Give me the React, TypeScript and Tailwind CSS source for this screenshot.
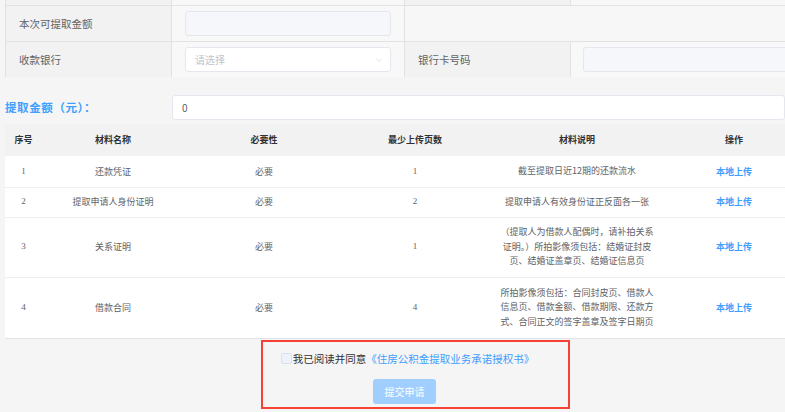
import { ChevronDown } from "lucide-react";

const cjk = "font-['Noto_Sans_CJK_SC','Noto_Sans',sans-serif]";
const serif = "font-['Liberation_Serif','Noto_Sans_CJK_SC',serif]";

const rows = [
  { no: "1", name: "还款凭证", pages: "1", desc: ["截至提取日近12期的还款流水"], h: "h-[31px]" },
  { no: "2", name: "提取申请人身份证明", pages: "2", desc: ["提取申请人有效身份证正反面各一张"], h: "h-[30px]" },
  {
    no: "3",
    name: "关系证明",
    pages: "1",
    desc: ["（提取人为借款人配偶时，请补拍关系", "证明。）所拍影像须包括：结婚证封皮", "页、结婚证盖章页、结婚证信息页"],
    h: "h-[60px]",
  },
  {
    no: "4",
    name: "借款合同",
    pages: "4",
    desc: ["所拍影像须包括：合同封皮页、借款人", "信息页、借款金额、借款期限、还款方", "式、合同正文的签字盖章及签字日期页"],
    h: "h-[61px]",
  },
];

const Label = ({ text }: { text?: string }) => (
  <div className="bg-[#f2f2f2] border-r border-[#e2e2e2] px-[13px] flex items-center text-[10.5px] text-[#606266]">
    {text}
  </div>
);

const DisabledInput = () => (
  <div className="h-[25px] w-full bg-[#f5f7fa] border border-[#e4e7ed] rounded-[3px]" />
);

const App = () => {
  return (
    <div className={`w-[785px] h-[412px] overflow-hidden bg-[#f5f5f5] ${cjk}`}>
      {/* scrolled form */}
      <div className="ml-[5px] w-[800px] border-l border-[#e2e2e2] -mt-[30px]">
        <div className="grid grid-cols-[166px_233px_166px_235px] h-[36px] border-b border-[#e2e2e2]">
          <Label />
          <div className="bg-[#f8f8f8] border-r border-[#e2e2e2] px-[13px] flex items-center">
            <DisabledInput />
          </div>
          <Label />
          <div className="bg-[#f8f8f8] px-[12px] flex items-center">
            <DisabledInput />
          </div>
        </div>
        <div className="grid grid-cols-[166px_233px_401px] h-[36px] border-b border-[#e2e2e2]">
          <Label text="本次可提取金额" />
          <div className="bg-[#f8f8f8] border-r border-[#e2e2e2] px-[13px] flex items-center">
            <DisabledInput />
          </div>
          <div className="bg-[#f7f7f7]" />
        </div>
        <div className="grid grid-cols-[166px_233px_166px_235px] h-[35px]">
          <Label text="收款银行" />
          <div className="bg-[#f8f8f8] border-r border-[#e2e2e2] px-[13px] flex items-center">
            <div className="h-[25px] w-full bg-white border border-[#e4e7ed] rounded-[3px] flex items-center justify-between pl-[9px] pr-[6px]">
              <span className="text-[10px] text-[#c0c4cc]">请选择</span>
              <ChevronDown size={10} strokeWidth={1.2} color="#c0c4cc" />
            </div>
          </div>
          <Label text="银行卡号码" />
          <div className="bg-[#f8f8f8] px-[12px] flex items-center">
            <DisabledInput />
          </div>
        </div>
      </div>

      {/* amount */}
      <div className="mt-[18px] ml-[5px] flex items-center h-[25px]">
        <div className="w-[167px] text-[11.5px] tracking-[0.6px] font-bold text-[#409eff]">提取金额（元）：</div>
        <div className="flex-1 h-[25px] bg-white border border-[#e4e7ed] rounded-[3px] flex items-center px-[9px] text-[10px] text-[#606266]">
          0
        </div>
      </div>

      {/* materials table */}
      <table className="mt-[4px] ml-[5px] w-[795px] table-fixed border-collapse text-[9px]">
        <colgroup>
          <col className="w-[37px]" />
          <col className="w-[142px]" />
          <col className="w-[160px]" />
          <col className="w-[142px]" />
          <col className="w-[182px]" />
          <col className="w-[132px]" />
        </colgroup>
        <thead>
          <tr className="h-[32px] bg-[#f2f2f2] text-[#303133] font-bold">
            <th className="font-bold">序号</th>
            <th className="font-bold">材料名称</th>
            <th className="font-bold">必要性</th>
            <th className="font-bold">最少上传页数</th>
            <th className="font-bold">材料说明</th>
            <th className="font-bold">操作</th>
          </tr>
        </thead>
        <tbody className="bg-white text-[#606266]">
          {rows.map((r, i) => (
            <tr
              key={r.no}
              className={`${r.h} border-b ${i === rows.length - 1 ? "border-[#e0e3e8]" : "border-[#eef0f4]"}`}
            >
              <td className={`text-center ${serif}`}>{r.no}</td>
              <td className="text-center">{r.name}</td>
              <td className="text-center">必要</td>
              <td className={`text-center ${serif}`}>{r.pages}</td>
              <td className="text-center leading-[14.5px]">
                {r.desc.map((line) => (
                  <div key={line} className="whitespace-nowrap">
                    {line}
                  </div>
                ))}
              </td>
              <td className="text-center font-bold text-[#409eff]">本地上传</td>
            </tr>
          ))}
        </tbody>
      </table>

      {/* agreement */}
      <div className="mt-[1px] ml-[261px] w-[309px] h-[69px] border-2 border-[#f44336] flex flex-col items-center pr-[22px] pt-[10px]">
        <div className="flex items-center h-[14px] pl-[6px]">
          <span className="w-[11px] h-[11px] border border-[#dcdfe6] bg-[#edf2fc] rounded-[2px]" />
          <span className="ml-[1px] text-[10.5px] text-[#303133]">我已阅读并同意</span>
          <span className="text-[10.5px] text-[#409eff]">《住房公积金提取业务承诺授权书》</span>
        </div>
        <button className="mt-[13px] w-[63px] h-[25px] bg-[#a0cfff] rounded-[3px] text-white text-[10px]">
          提交申请
        </button>
      </div>
    </div>
  );
};

export default App;
